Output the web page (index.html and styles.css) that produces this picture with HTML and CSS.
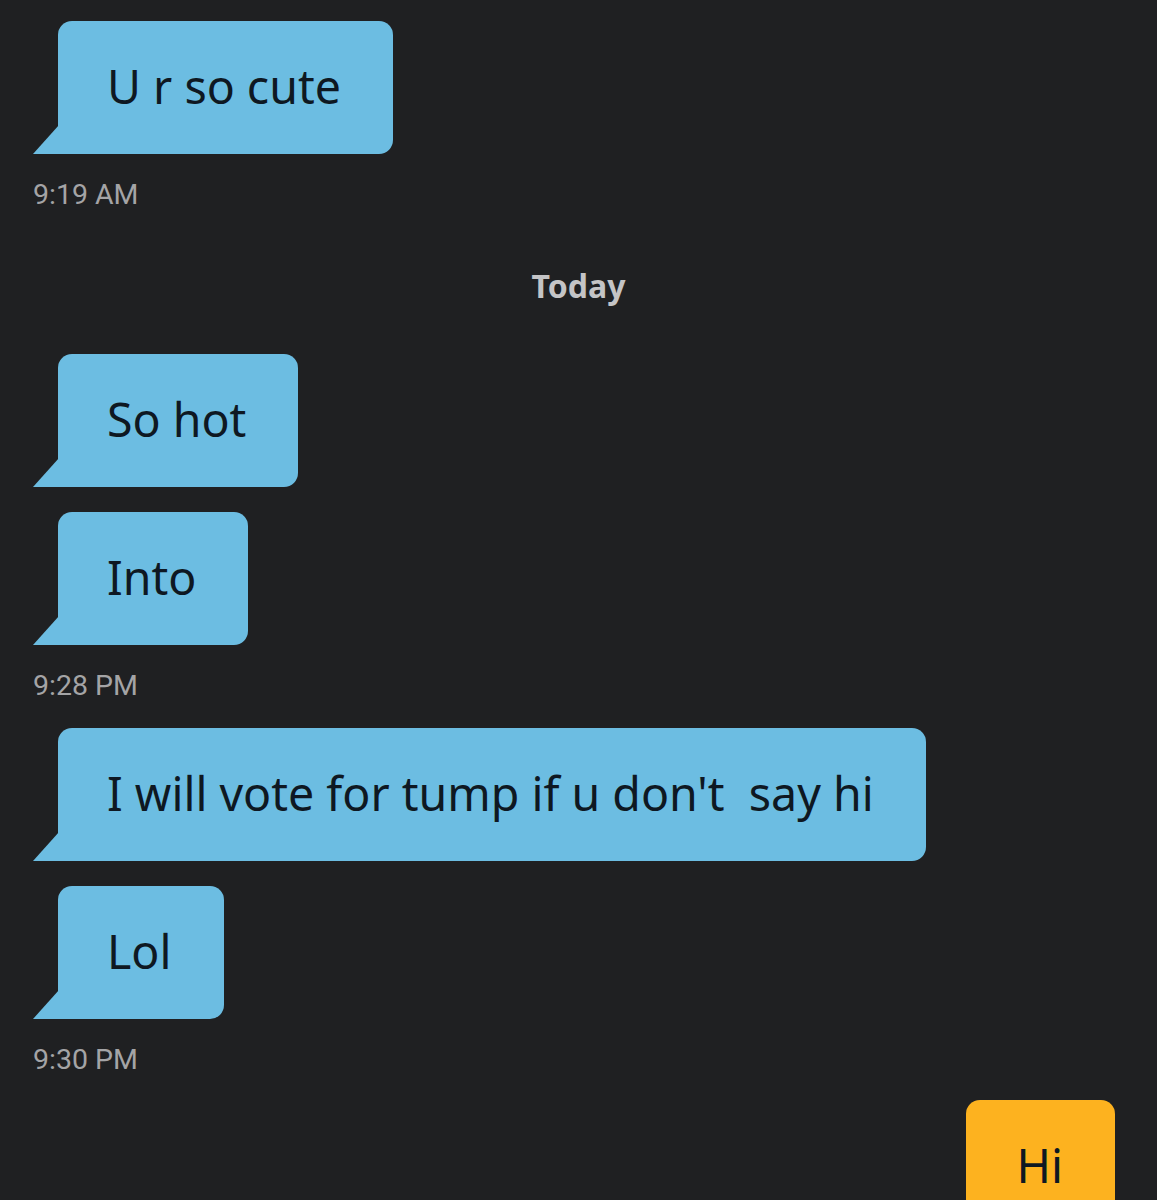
FILE: index.html
```html
<!DOCTYPE html>
<html lang="en">
    <head>
        <meta charset="UTF-8">
        <meta name="viewport" content="width=device-width, initial-scale=1.0">
        <title>Chat</title>
        <link rel="stylesheet" href="styles.css">
    </head>
<body>
    <main class="chat">
        <section class="group">
            <div class="bubble incoming">U r so cute</div>
            <div class="time">9:19 AM</div>
        </section>

        <div class="day">Today</div>

        <section class="group">
            <div class="bubble incoming">So hot</div>
            <div class="bubble incoming">Into</div>
            <div class="time">9:28 PM</div>
        </section>

        <section class="group">
            <div class="bubble incoming">I will vote for tump if u don't&nbsp; say hi</div>
            <div class="bubble incoming">Lol</div>
            <div class="time">9:30 PM</div>
        </section>

        <section class="group mine">
            <div class="bubble outgoing">Hi</div>
        </section>
    </main>
</body>
</html>
```

FILE: styles.css
```css
body {
    margin: 0;
    background-color: #1f2022;
    color: #0e1822;
    overflow: hidden;
}

.chat {
    display: flex;
    flex-direction: column;
    padding: 21px 33px 0 33px;
}

.group {
    display: flex;
    flex-direction: column;
    align-items: flex-start;
    gap: 25px;
}

.group + .group {
    margin-top: 26px;
}

.group.mine {
    align-items: flex-end;
    margin-top: 24px;
    margin-right: 9px;
}

.bubble {
    position: relative;
    display: flex;
    align-items: center;
    height: 133px;
    box-sizing: border-box;
    padding: 0 52px 4px 49px;
    font-family: "Noto Sans", sans-serif;
    font-size: 46.5px;
    white-space: pre;
}

.incoming {
    margin-left: 25px;
    background-color: #6cbde2;
    border-radius: 14px 14px 14px 0;
}

/* little tail at the bottom left */
.incoming::before {
    content: "";
    position: absolute;
    left: -25px;
    bottom: 0;
    width: 26px;
    height: 29px;
    background-color: #6cbde2;
    clip-path: polygon(100% 0, 100% 100%, 0 100%);
}

.outgoing {
    background-color: #fdb21f;
    border-radius: 14px;
    padding: 0 52px 4px 51px;
}

.time {
    margin-top: -1px;
    font-family: "Roboto", sans-serif;
    font-size: 28.5px;
    color: #a4a4a6;
}

.day {
    margin: 53px 0 47px;
    text-align: center;
    font-family: "Noto Sans", sans-serif;
    font-weight: bold;
    font-size: 32px;
    color: #c4c4c6;
}
```
